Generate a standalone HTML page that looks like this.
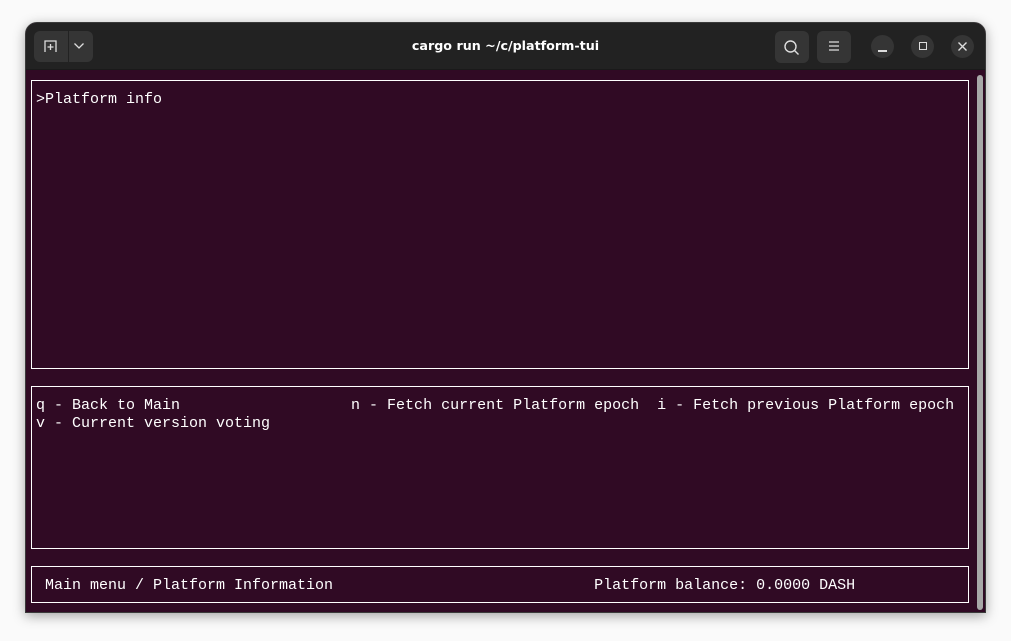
<!DOCTYPE html>
<html><head><style>
*{margin:0;padding:0;box-sizing:border-box}
body{width:1011px;height:641px;background:#fafafa;position:relative;overflow:hidden;font-family:"Liberation Mono",monospace}
.win{position:absolute;left:25px;top:22px;width:961px;height:591px;border-radius:12px 12px 0 0;background:#300a24;overflow:hidden;box-shadow:0 3px 12px rgba(0,0,0,.35);border:1px solid #3a3a3a}
.hdr{position:absolute;left:0;top:0;width:100%;height:47px;background:#222222;border-bottom:1px solid #1a1a1a}
.btn{position:absolute;background:#353535;border-radius:6px}
.circ{position:absolute;width:23px;height:23px;border-radius:50%;background:#353535;top:12px}
.title{position:absolute;left:0;width:100%;top:15px;text-align:center;color:#fff;font:bold 12.7px "DejaVu Sans","Liberation Sans",sans-serif}
.box{position:absolute;border:1.3px solid #fff}
.t{position:absolute;color:#fff;font-size:15px;line-height:18px;white-space:pre}
.sb{position:absolute;left:951px;top:52px;width:6px;height:535px;background:#a8a8a8;border-radius:3px}
</style></head><body>
<div class="win">
<div class="hdr">
 <div class="btn" style="left:8px;top:8px;width:59px;height:31px"></div>
 <div style="position:absolute;left:42px;top:8px;width:1px;height:31px;background:#222"></div>
 <svg style="position:absolute;left:16px;top:15px" width="18" height="16" viewBox="0 0 18 16"><path d="M3 14V3h11v11M8.5 6v6M5.5 9h6" stroke="#ddd" stroke-width="1.3" fill="none"/></svg>
 <svg style="position:absolute;left:47px;top:18px" width="12" height="10" viewBox="0 0 12 10"><path d="M1.5 2.5l4.5 4.5 4.5-4.5" stroke="#ddd" stroke-width="1.3" fill="none"/></svg>
 <div class="title">cargo run ~/c/platform-tui</div>
 <div class="btn" style="left:749px;top:8px;width:34px;height:32px"></div>
 <svg style="position:absolute;left:756px;top:15px" width="20" height="20" viewBox="0 0 20 20"><circle cx="8.5" cy="8.5" r="5.5" stroke="#ddd" stroke-width="1.4" fill="none"/><path d="M12.5 12.5l4 4" stroke="#ddd" stroke-width="1.4"/></svg>
 <div class="btn" style="left:791px;top:8px;width:34px;height:32px"></div>
 <svg style="position:absolute;left:801px;top:17px" width="14" height="12" viewBox="0 0 14 12"><path d="M2 2h10M2 6h10M2 10h10" stroke="#ddd" stroke-width="1.3"/></svg>
 <div class="circ" style="left:845px"></div>
 <div style="position:absolute;left:852px;top:27px;width:9px;height:1.5px;background:#ddd"></div>
 <div class="circ" style="left:885px"></div>
 <div style="position:absolute;left:893px;top:19px;width:8px;height:8px;border:1.4px solid #ddd"></div>
 <div class="circ" style="left:925px"></div>
 <svg style="position:absolute;left:931px;top:18px" width="11" height="11" viewBox="0 0 11 11"><path d="M1.5 1.5l8 8M9.5 1.5l-8 8" stroke="#ddd" stroke-width="1.4"/></svg>
</div>
<div class="box" style="left:5px;top:57px;width:938px;height:289px"></div>
<div class="box" style="left:5px;top:363px;width:938px;height:163px"></div>
<div class="box" style="left:5px;top:543px;width:938px;height:37px"></div>
<div class="t" style="left:10px;top:68px">&gt;Platform info</div>
<div class="t" style="left:10px;top:374px">q - Back to Main                   n - Fetch current Platform epoch  i - Fetch previous Platform epoch
v - Current version voting</div>
<div class="t" style="left:19px;top:554px">Main menu / Platform Information                             Platform balance: 0.0000 DASH</div>
<div class="sb"></div>
</div>
</body></html>
